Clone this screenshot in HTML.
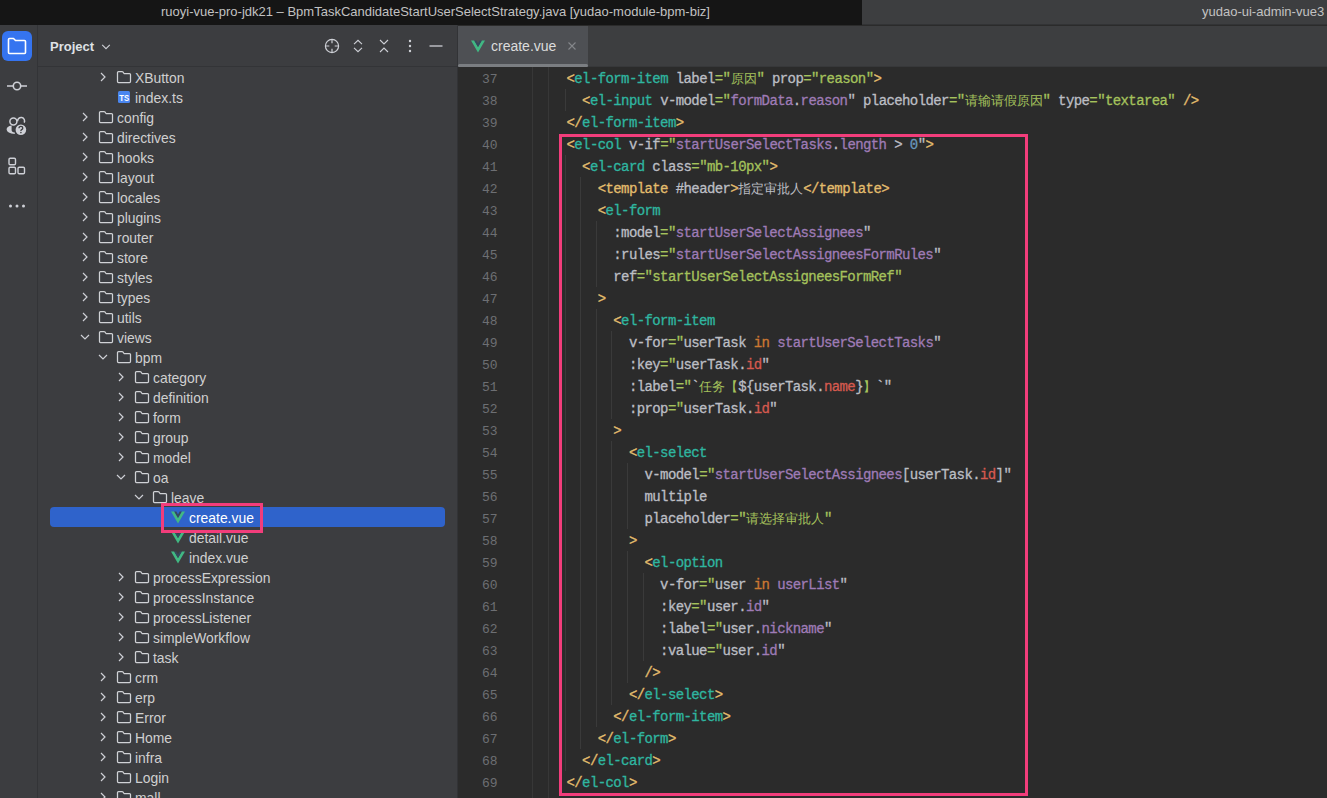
<!DOCTYPE html>
<html><head><meta charset="utf-8"><style>
*{margin:0;padding:0;box-sizing:border-box}
html,body{width:1327px;height:798px;overflow:hidden;background:#2b2b2b;font-family:"Liberation Sans",sans-serif}
.abs{position:absolute}
#title{position:absolute;left:0;top:0;width:862px;height:25px;background:#151515}
#title2{position:absolute;left:862px;top:0;width:465px;height:25px;background:#3d3e40;border-bottom:1px solid #323335}
.ttl{position:absolute;top:-1px;height:25px;line-height:25px;font-size:13px;color:#c2c2c2;white-space:nowrap}
#strip{position:absolute;left:0;top:25px;width:37px;height:773px;background:#3c3d40}
#sb{position:absolute;left:37px;top:25px;width:1px;height:773px;background:#333437}
#panel{position:absolute;left:38px;top:25px;width:419px;height:773px;background:#3c3d40}
#ph{position:absolute;left:38px;top:66px;width:419px;height:1px;background:#333437}
#tabbar{position:absolute;left:457px;top:26px;width:870px;height:41px;background:#3d3e40}
#editor{position:absolute;left:457px;top:67px;width:870px;height:731px;background:#2b2b2b}
.row{position:absolute;left:38px;width:419px;height:20px}
.tt{position:absolute;top:1px;height:20px;line-height:20px;font-size:13.9px;color:#d0d0d0;white-space:nowrap}
.ln{position:absolute;height:22px;line-height:22px;padding-top:1px;font-family:"Liberation Mono",monospace;font-size:14px;letter-spacing:-0.6px;white-space:pre;-webkit-text-stroke:0.3px}
.cj{display:inline-block;width:13.0px;font-style:normal;text-align:center;font-size:13px;-webkit-text-stroke:0}
.num{position:absolute;left:457px;width:40.5px;text-align:right;height:22px;line-height:22px;font-family:"Liberation Mono",monospace;font-size:13px;padding-top:2px;color:#6d6f73}
.guide{position:absolute;width:1px;background:#3a3a3a}
.fi,.ar{display:block}
</style></head><body>
<div id="title"></div><div id="title2"></div>
<div class="ttl" style="left:161px">ruoyi-vue-pro-jdk21 – BpmTaskCandidateStartUserSelectStrategy.java [yudao-module-bpm-biz]</div>
<div class="ttl" style="left:1202px">yudao-ui-admin-vue3</div>
<div id="strip"></div><div id="sb"></div>
<div id="panel"></div><div id="ph"></div>
<div id="tabbar"></div><div class="abs" style="left:457px;top:66px;width:870px;height:1px;background:#37383a"></div>
<div id="editor"></div><div class="abs" style="left:457px;top:25px;width:1px;height:773px;background:#323336"></div>
<!-- strip icons -->
<div class="abs" style="left:2px;top:31px;width:30px;height:30px;border-radius:6px;background:#3574f0"></div>
<svg class="abs" style="left:0;top:25px" width="37" height="200" viewBox="0 0 37 200">
  <path d="M8.5 14.5 Q8.5 13.5 9.5 13.5 H13.5 L15.5 15.5 H24.5 Q25.5 15.5 25.5 16.5 V27.5 Q25.5 28.5 24.5 28.5 H9.5 Q8.5 28.5 8.5 27.5 Z" fill="none" stroke="#fff" stroke-width="1.6" stroke-linejoin="round"/>
  <path d="M7 61 H13.3 M20.7 61 H27" stroke="#ced0d6" stroke-width="1.6"/>
  <circle cx="17" cy="61" r="3.7" fill="none" stroke="#ced0d6" stroke-width="1.6"/>
  <circle cx="13.4" cy="96.4" r="3.5" fill="none" stroke="#ced0d6" stroke-width="1.5"/>
  <path d="M17.6 96.2 A3.5 3.5 0 1 1 24.2 97.6" fill="none" stroke="#ced0d6" stroke-width="1.5"/>
  <path d="M11.6 100.6 Q6.6 101.4 6.6 104.6 Q6.9 108.6 14.8 108.9 L14.8 107.4 Q11.6 107.2 11.6 105 Z" fill="#ced0d6"/>
  <circle cx="20.9" cy="104.8" r="6.3" fill="#3c3d40"/>
  <circle cx="20.9" cy="104.8" r="5.3" fill="#ced0d6"/>
  <path d="M19 103.2 Q19 101.3 20.9 101.3 Q22.8 101.3 22.8 103 Q22.8 104.2 21.6 104.6 Q20.9 104.9 20.9 106" fill="none" stroke="#3c3d40" stroke-width="1.3"/>
  <circle cx="20.9" cy="107.6" r="0.8" fill="#3c3d40"/>
  <rect x="9" y="133.2" width="6.5" height="6.5" rx="1.2" fill="none" stroke="#ced0d6" stroke-width="1.4"/>
  <rect x="9" y="142.2" width="6.5" height="6.5" rx="1.2" fill="none" stroke="#ced0d6" stroke-width="1.4"/>
  <rect x="18" y="142.2" width="6.5" height="6.5" rx="1.2" fill="none" stroke="#ced0d6" stroke-width="1.4"/>
  <circle cx="10.5" cy="181" r="1.5" fill="#ced0d6"/><circle cx="17" cy="181" r="1.5" fill="#ced0d6"/><circle cx="23.5" cy="181" r="1.5" fill="#ced0d6"/>
</svg>
<!-- panel header -->
<svg class="abs" style="left:100px;top:40px" width="12" height="12" viewBox="0 0 12 12"><path d="M2.2 4.8 L6 8.6 L9.8 4.8" fill="none" stroke="#ced0d6" stroke-width="1.1"/></svg>
<div class="abs" style="left:50px;top:26px;height:41px;line-height:41px;font-size:13px;font-weight:bold;color:#dfe1e5">Project</div>
<svg class="abs" style="left:300px;top:25px" width="157" height="41" viewBox="0 0 157 41">
  
  <circle cx="32" cy="21" r="6.6" fill="none" stroke="#ced0d6" stroke-width="1.2"/>
  <path d="M32 14.5 V18.3 M32 23.7 V27.5 M25.5 21 H29.3 M34.7 21 H38.5" stroke="#ced0d6" stroke-width="1.2"/>
  <path d="M54 19.2 L58 15.3 L62 19.2 M54 22.8 L58 26.7 L62 22.8" fill="none" stroke="#ced0d6" stroke-width="1.1"/>
  <path d="M80 15 L84 19 L88 15 M80 27 L84 23 L88 27" fill="none" stroke="#ced0d6" stroke-width="1.1"/>
  <circle cx="110" cy="16" r="1.2" fill="#ced0d6"/><circle cx="110" cy="21" r="1.2" fill="#ced0d6"/><circle cx="110" cy="26" r="1.2" fill="#ced0d6"/>
  <path d="M129.5 21 H142.5" stroke="#ced0d6" stroke-width="1.3"/>
</svg>
<!-- tree -->
<div class="abs" style="left:50px;top:507px;width:395px;height:20px;border-radius:4px;background:#2f63cb"></div>
<div class="row" style="top:67px"><div style="position:absolute;left:57px;top:2px"><svg class="ar" width="16" height="16" viewBox="0 0 16 16"><path d="M6 4 L10 8 L6 12" fill="none" stroke="#ced0d6" stroke-width="1.2"/></svg></div><div style="position:absolute;left:78px;top:2px"><svg class="fi" width="16" height="16" viewBox="0 0 16 16"><path d="M1.5 3.5 Q1.5 2.5 2.5 2.5 H6 Q6.6 2.5 7 3 L8 4.5 H13.5 Q14.5 4.5 14.5 5.5 V12.5 Q14.5 13.5 13.5 13.5 H2.5 Q1.5 13.5 1.5 12.5 Z" fill="#3b3d42" stroke="#d0d2d6" stroke-width="1.25" stroke-linejoin="round"/></svg></div><div class="tt" style="left:97px;">XButton</div></div><div class="row" style="top:87px"><div style="position:absolute;left:78px;top:2px"><svg class="fi" width="16" height="16" viewBox="0 0 16 16"><rect x="2" y="2" width="12" height="12" rx="1.5" fill="#4a86ef"/><text x="8.2" y="12" font-family="Liberation Sans" font-size="8.8" font-weight="bold" fill="#fff" text-anchor="middle" textLength="10" lengthAdjust="spacingAndGlyphs">TS</text></svg></div><div class="tt" style="left:97px;">index.ts</div></div><div class="row" style="top:107px"><div style="position:absolute;left:39px;top:2px"><svg class="ar" width="16" height="16" viewBox="0 0 16 16"><path d="M6 4 L10 8 L6 12" fill="none" stroke="#ced0d6" stroke-width="1.2"/></svg></div><div style="position:absolute;left:60px;top:2px"><svg class="fi" width="16" height="16" viewBox="0 0 16 16"><path d="M1.5 3.5 Q1.5 2.5 2.5 2.5 H6 Q6.6 2.5 7 3 L8 4.5 H13.5 Q14.5 4.5 14.5 5.5 V12.5 Q14.5 13.5 13.5 13.5 H2.5 Q1.5 13.5 1.5 12.5 Z" fill="#3b3d42" stroke="#d0d2d6" stroke-width="1.25" stroke-linejoin="round"/></svg></div><div class="tt" style="left:79px;">config</div></div><div class="row" style="top:127px"><div style="position:absolute;left:39px;top:2px"><svg class="ar" width="16" height="16" viewBox="0 0 16 16"><path d="M6 4 L10 8 L6 12" fill="none" stroke="#ced0d6" stroke-width="1.2"/></svg></div><div style="position:absolute;left:60px;top:2px"><svg class="fi" width="16" height="16" viewBox="0 0 16 16"><path d="M1.5 3.5 Q1.5 2.5 2.5 2.5 H6 Q6.6 2.5 7 3 L8 4.5 H13.5 Q14.5 4.5 14.5 5.5 V12.5 Q14.5 13.5 13.5 13.5 H2.5 Q1.5 13.5 1.5 12.5 Z" fill="#3b3d42" stroke="#d0d2d6" stroke-width="1.25" stroke-linejoin="round"/></svg></div><div class="tt" style="left:79px;">directives</div></div><div class="row" style="top:147px"><div style="position:absolute;left:39px;top:2px"><svg class="ar" width="16" height="16" viewBox="0 0 16 16"><path d="M6 4 L10 8 L6 12" fill="none" stroke="#ced0d6" stroke-width="1.2"/></svg></div><div style="position:absolute;left:60px;top:2px"><svg class="fi" width="16" height="16" viewBox="0 0 16 16"><path d="M1.5 3.5 Q1.5 2.5 2.5 2.5 H6 Q6.6 2.5 7 3 L8 4.5 H13.5 Q14.5 4.5 14.5 5.5 V12.5 Q14.5 13.5 13.5 13.5 H2.5 Q1.5 13.5 1.5 12.5 Z" fill="#3b3d42" stroke="#d0d2d6" stroke-width="1.25" stroke-linejoin="round"/></svg></div><div class="tt" style="left:79px;">hooks</div></div><div class="row" style="top:167px"><div style="position:absolute;left:39px;top:2px"><svg class="ar" width="16" height="16" viewBox="0 0 16 16"><path d="M6 4 L10 8 L6 12" fill="none" stroke="#ced0d6" stroke-width="1.2"/></svg></div><div style="position:absolute;left:60px;top:2px"><svg class="fi" width="16" height="16" viewBox="0 0 16 16"><path d="M1.5 3.5 Q1.5 2.5 2.5 2.5 H6 Q6.6 2.5 7 3 L8 4.5 H13.5 Q14.5 4.5 14.5 5.5 V12.5 Q14.5 13.5 13.5 13.5 H2.5 Q1.5 13.5 1.5 12.5 Z" fill="#3b3d42" stroke="#d0d2d6" stroke-width="1.25" stroke-linejoin="round"/></svg></div><div class="tt" style="left:79px;">layout</div></div><div class="row" style="top:187px"><div style="position:absolute;left:39px;top:2px"><svg class="ar" width="16" height="16" viewBox="0 0 16 16"><path d="M6 4 L10 8 L6 12" fill="none" stroke="#ced0d6" stroke-width="1.2"/></svg></div><div style="position:absolute;left:60px;top:2px"><svg class="fi" width="16" height="16" viewBox="0 0 16 16"><path d="M1.5 3.5 Q1.5 2.5 2.5 2.5 H6 Q6.6 2.5 7 3 L8 4.5 H13.5 Q14.5 4.5 14.5 5.5 V12.5 Q14.5 13.5 13.5 13.5 H2.5 Q1.5 13.5 1.5 12.5 Z" fill="#3b3d42" stroke="#d0d2d6" stroke-width="1.25" stroke-linejoin="round"/></svg></div><div class="tt" style="left:79px;">locales</div></div><div class="row" style="top:207px"><div style="position:absolute;left:39px;top:2px"><svg class="ar" width="16" height="16" viewBox="0 0 16 16"><path d="M6 4 L10 8 L6 12" fill="none" stroke="#ced0d6" stroke-width="1.2"/></svg></div><div style="position:absolute;left:60px;top:2px"><svg class="fi" width="16" height="16" viewBox="0 0 16 16"><path d="M1.5 3.5 Q1.5 2.5 2.5 2.5 H6 Q6.6 2.5 7 3 L8 4.5 H13.5 Q14.5 4.5 14.5 5.5 V12.5 Q14.5 13.5 13.5 13.5 H2.5 Q1.5 13.5 1.5 12.5 Z" fill="#3b3d42" stroke="#d0d2d6" stroke-width="1.25" stroke-linejoin="round"/></svg></div><div class="tt" style="left:79px;">plugins</div></div><div class="row" style="top:227px"><div style="position:absolute;left:39px;top:2px"><svg class="ar" width="16" height="16" viewBox="0 0 16 16"><path d="M6 4 L10 8 L6 12" fill="none" stroke="#ced0d6" stroke-width="1.2"/></svg></div><div style="position:absolute;left:60px;top:2px"><svg class="fi" width="16" height="16" viewBox="0 0 16 16"><path d="M1.5 3.5 Q1.5 2.5 2.5 2.5 H6 Q6.6 2.5 7 3 L8 4.5 H13.5 Q14.5 4.5 14.5 5.5 V12.5 Q14.5 13.5 13.5 13.5 H2.5 Q1.5 13.5 1.5 12.5 Z" fill="#3b3d42" stroke="#d0d2d6" stroke-width="1.25" stroke-linejoin="round"/></svg></div><div class="tt" style="left:79px;">router</div></div><div class="row" style="top:247px"><div style="position:absolute;left:39px;top:2px"><svg class="ar" width="16" height="16" viewBox="0 0 16 16"><path d="M6 4 L10 8 L6 12" fill="none" stroke="#ced0d6" stroke-width="1.2"/></svg></div><div style="position:absolute;left:60px;top:2px"><svg class="fi" width="16" height="16" viewBox="0 0 16 16"><path d="M1.5 3.5 Q1.5 2.5 2.5 2.5 H6 Q6.6 2.5 7 3 L8 4.5 H13.5 Q14.5 4.5 14.5 5.5 V12.5 Q14.5 13.5 13.5 13.5 H2.5 Q1.5 13.5 1.5 12.5 Z" fill="#3b3d42" stroke="#d0d2d6" stroke-width="1.25" stroke-linejoin="round"/></svg></div><div class="tt" style="left:79px;">store</div></div><div class="row" style="top:267px"><div style="position:absolute;left:39px;top:2px"><svg class="ar" width="16" height="16" viewBox="0 0 16 16"><path d="M6 4 L10 8 L6 12" fill="none" stroke="#ced0d6" stroke-width="1.2"/></svg></div><div style="position:absolute;left:60px;top:2px"><svg class="fi" width="16" height="16" viewBox="0 0 16 16"><path d="M1.5 3.5 Q1.5 2.5 2.5 2.5 H6 Q6.6 2.5 7 3 L8 4.5 H13.5 Q14.5 4.5 14.5 5.5 V12.5 Q14.5 13.5 13.5 13.5 H2.5 Q1.5 13.5 1.5 12.5 Z" fill="#3b3d42" stroke="#d0d2d6" stroke-width="1.25" stroke-linejoin="round"/></svg></div><div class="tt" style="left:79px;">styles</div></div><div class="row" style="top:287px"><div style="position:absolute;left:39px;top:2px"><svg class="ar" width="16" height="16" viewBox="0 0 16 16"><path d="M6 4 L10 8 L6 12" fill="none" stroke="#ced0d6" stroke-width="1.2"/></svg></div><div style="position:absolute;left:60px;top:2px"><svg class="fi" width="16" height="16" viewBox="0 0 16 16"><path d="M1.5 3.5 Q1.5 2.5 2.5 2.5 H6 Q6.6 2.5 7 3 L8 4.5 H13.5 Q14.5 4.5 14.5 5.5 V12.5 Q14.5 13.5 13.5 13.5 H2.5 Q1.5 13.5 1.5 12.5 Z" fill="#3b3d42" stroke="#d0d2d6" stroke-width="1.25" stroke-linejoin="round"/></svg></div><div class="tt" style="left:79px;">types</div></div><div class="row" style="top:307px"><div style="position:absolute;left:39px;top:2px"><svg class="ar" width="16" height="16" viewBox="0 0 16 16"><path d="M6 4 L10 8 L6 12" fill="none" stroke="#ced0d6" stroke-width="1.2"/></svg></div><div style="position:absolute;left:60px;top:2px"><svg class="fi" width="16" height="16" viewBox="0 0 16 16"><path d="M1.5 3.5 Q1.5 2.5 2.5 2.5 H6 Q6.6 2.5 7 3 L8 4.5 H13.5 Q14.5 4.5 14.5 5.5 V12.5 Q14.5 13.5 13.5 13.5 H2.5 Q1.5 13.5 1.5 12.5 Z" fill="#3b3d42" stroke="#d0d2d6" stroke-width="1.25" stroke-linejoin="round"/></svg></div><div class="tt" style="left:79px;">utils</div></div><div class="row" style="top:327px"><div style="position:absolute;left:39px;top:2px"><svg class="ar" width="16" height="16" viewBox="0 0 16 16"><path d="M4 6 L8 10 L12 6" fill="none" stroke="#ced0d6" stroke-width="1.2"/></svg></div><div style="position:absolute;left:60px;top:2px"><svg class="fi" width="16" height="16" viewBox="0 0 16 16"><path d="M1.5 3.5 Q1.5 2.5 2.5 2.5 H6 Q6.6 2.5 7 3 L8 4.5 H13.5 Q14.5 4.5 14.5 5.5 V12.5 Q14.5 13.5 13.5 13.5 H2.5 Q1.5 13.5 1.5 12.5 Z" fill="#3b3d42" stroke="#d0d2d6" stroke-width="1.25" stroke-linejoin="round"/></svg></div><div class="tt" style="left:79px;">views</div></div><div class="row" style="top:347px"><div style="position:absolute;left:57px;top:2px"><svg class="ar" width="16" height="16" viewBox="0 0 16 16"><path d="M4 6 L8 10 L12 6" fill="none" stroke="#ced0d6" stroke-width="1.2"/></svg></div><div style="position:absolute;left:78px;top:2px"><svg class="fi" width="16" height="16" viewBox="0 0 16 16"><path d="M1.5 3.5 Q1.5 2.5 2.5 2.5 H6 Q6.6 2.5 7 3 L8 4.5 H13.5 Q14.5 4.5 14.5 5.5 V12.5 Q14.5 13.5 13.5 13.5 H2.5 Q1.5 13.5 1.5 12.5 Z" fill="#3b3d42" stroke="#d0d2d6" stroke-width="1.25" stroke-linejoin="round"/></svg></div><div class="tt" style="left:97px;">bpm</div></div><div class="row" style="top:367px"><div style="position:absolute;left:75px;top:2px"><svg class="ar" width="16" height="16" viewBox="0 0 16 16"><path d="M6 4 L10 8 L6 12" fill="none" stroke="#ced0d6" stroke-width="1.2"/></svg></div><div style="position:absolute;left:96px;top:2px"><svg class="fi" width="16" height="16" viewBox="0 0 16 16"><path d="M1.5 3.5 Q1.5 2.5 2.5 2.5 H6 Q6.6 2.5 7 3 L8 4.5 H13.5 Q14.5 4.5 14.5 5.5 V12.5 Q14.5 13.5 13.5 13.5 H2.5 Q1.5 13.5 1.5 12.5 Z" fill="#3b3d42" stroke="#d0d2d6" stroke-width="1.25" stroke-linejoin="round"/></svg></div><div class="tt" style="left:115px;">category</div></div><div class="row" style="top:387px"><div style="position:absolute;left:75px;top:2px"><svg class="ar" width="16" height="16" viewBox="0 0 16 16"><path d="M6 4 L10 8 L6 12" fill="none" stroke="#ced0d6" stroke-width="1.2"/></svg></div><div style="position:absolute;left:96px;top:2px"><svg class="fi" width="16" height="16" viewBox="0 0 16 16"><path d="M1.5 3.5 Q1.5 2.5 2.5 2.5 H6 Q6.6 2.5 7 3 L8 4.5 H13.5 Q14.5 4.5 14.5 5.5 V12.5 Q14.5 13.5 13.5 13.5 H2.5 Q1.5 13.5 1.5 12.5 Z" fill="#3b3d42" stroke="#d0d2d6" stroke-width="1.25" stroke-linejoin="round"/></svg></div><div class="tt" style="left:115px;">definition</div></div><div class="row" style="top:407px"><div style="position:absolute;left:75px;top:2px"><svg class="ar" width="16" height="16" viewBox="0 0 16 16"><path d="M6 4 L10 8 L6 12" fill="none" stroke="#ced0d6" stroke-width="1.2"/></svg></div><div style="position:absolute;left:96px;top:2px"><svg class="fi" width="16" height="16" viewBox="0 0 16 16"><path d="M1.5 3.5 Q1.5 2.5 2.5 2.5 H6 Q6.6 2.5 7 3 L8 4.5 H13.5 Q14.5 4.5 14.5 5.5 V12.5 Q14.5 13.5 13.5 13.5 H2.5 Q1.5 13.5 1.5 12.5 Z" fill="#3b3d42" stroke="#d0d2d6" stroke-width="1.25" stroke-linejoin="round"/></svg></div><div class="tt" style="left:115px;">form</div></div><div class="row" style="top:427px"><div style="position:absolute;left:75px;top:2px"><svg class="ar" width="16" height="16" viewBox="0 0 16 16"><path d="M6 4 L10 8 L6 12" fill="none" stroke="#ced0d6" stroke-width="1.2"/></svg></div><div style="position:absolute;left:96px;top:2px"><svg class="fi" width="16" height="16" viewBox="0 0 16 16"><path d="M1.5 3.5 Q1.5 2.5 2.5 2.5 H6 Q6.6 2.5 7 3 L8 4.5 H13.5 Q14.5 4.5 14.5 5.5 V12.5 Q14.5 13.5 13.5 13.5 H2.5 Q1.5 13.5 1.5 12.5 Z" fill="#3b3d42" stroke="#d0d2d6" stroke-width="1.25" stroke-linejoin="round"/></svg></div><div class="tt" style="left:115px;">group</div></div><div class="row" style="top:447px"><div style="position:absolute;left:75px;top:2px"><svg class="ar" width="16" height="16" viewBox="0 0 16 16"><path d="M6 4 L10 8 L6 12" fill="none" stroke="#ced0d6" stroke-width="1.2"/></svg></div><div style="position:absolute;left:96px;top:2px"><svg class="fi" width="16" height="16" viewBox="0 0 16 16"><path d="M1.5 3.5 Q1.5 2.5 2.5 2.5 H6 Q6.6 2.5 7 3 L8 4.5 H13.5 Q14.5 4.5 14.5 5.5 V12.5 Q14.5 13.5 13.5 13.5 H2.5 Q1.5 13.5 1.5 12.5 Z" fill="#3b3d42" stroke="#d0d2d6" stroke-width="1.25" stroke-linejoin="round"/></svg></div><div class="tt" style="left:115px;">model</div></div><div class="row" style="top:467px"><div style="position:absolute;left:75px;top:2px"><svg class="ar" width="16" height="16" viewBox="0 0 16 16"><path d="M4 6 L8 10 L12 6" fill="none" stroke="#ced0d6" stroke-width="1.2"/></svg></div><div style="position:absolute;left:96px;top:2px"><svg class="fi" width="16" height="16" viewBox="0 0 16 16"><path d="M1.5 3.5 Q1.5 2.5 2.5 2.5 H6 Q6.6 2.5 7 3 L8 4.5 H13.5 Q14.5 4.5 14.5 5.5 V12.5 Q14.5 13.5 13.5 13.5 H2.5 Q1.5 13.5 1.5 12.5 Z" fill="#3b3d42" stroke="#d0d2d6" stroke-width="1.25" stroke-linejoin="round"/></svg></div><div class="tt" style="left:115px;">oa</div></div><div class="row" style="top:487px"><div style="position:absolute;left:93px;top:2px"><svg class="ar" width="16" height="16" viewBox="0 0 16 16"><path d="M4 6 L8 10 L12 6" fill="none" stroke="#ced0d6" stroke-width="1.2"/></svg></div><div style="position:absolute;left:114px;top:2px"><svg class="fi" width="16" height="16" viewBox="0 0 16 16"><path d="M1.5 3.5 Q1.5 2.5 2.5 2.5 H6 Q6.6 2.5 7 3 L8 4.5 H13.5 Q14.5 4.5 14.5 5.5 V12.5 Q14.5 13.5 13.5 13.5 H2.5 Q1.5 13.5 1.5 12.5 Z" fill="#3b3d42" stroke="#d0d2d6" stroke-width="1.25" stroke-linejoin="round"/></svg></div><div class="tt" style="left:133px;">leave</div></div><div class="row" style="top:507px"><div style="position:absolute;left:132px;top:2px"><svg class="fi" width="16" height="16" viewBox="0 0 16 16"><path d="M1 2.5 H4.2 L8 9 L11.8 2.5 H15 L8 14.5 Z" fill="#41b883"/><path d="M4.2 2.5 H6.3 L8 5.5 L9.7 2.5 H11.8 L8 9 Z" fill="#35495e"/></svg></div><div class="tt" style="left:151px;color:#fff">create.vue</div></div><div class="row" style="top:527px"><div style="position:absolute;left:132px;top:2px"><svg class="fi" width="16" height="16" viewBox="0 0 16 16"><path d="M1 2.5 H4.2 L8 9 L11.8 2.5 H15 L8 14.5 Z" fill="#41b883"/><path d="M4.2 2.5 H6.3 L8 5.5 L9.7 2.5 H11.8 L8 9 Z" fill="#35495e"/></svg></div><div class="tt" style="left:151px;">detail.vue</div></div><div class="row" style="top:547px"><div style="position:absolute;left:132px;top:2px"><svg class="fi" width="16" height="16" viewBox="0 0 16 16"><path d="M1 2.5 H4.2 L8 9 L11.8 2.5 H15 L8 14.5 Z" fill="#41b883"/><path d="M4.2 2.5 H6.3 L8 5.5 L9.7 2.5 H11.8 L8 9 Z" fill="#35495e"/></svg></div><div class="tt" style="left:151px;">index.vue</div></div><div class="row" style="top:567px"><div style="position:absolute;left:75px;top:2px"><svg class="ar" width="16" height="16" viewBox="0 0 16 16"><path d="M6 4 L10 8 L6 12" fill="none" stroke="#ced0d6" stroke-width="1.2"/></svg></div><div style="position:absolute;left:96px;top:2px"><svg class="fi" width="16" height="16" viewBox="0 0 16 16"><path d="M1.5 3.5 Q1.5 2.5 2.5 2.5 H6 Q6.6 2.5 7 3 L8 4.5 H13.5 Q14.5 4.5 14.5 5.5 V12.5 Q14.5 13.5 13.5 13.5 H2.5 Q1.5 13.5 1.5 12.5 Z" fill="#3b3d42" stroke="#d0d2d6" stroke-width="1.25" stroke-linejoin="round"/></svg></div><div class="tt" style="left:115px;">processExpression</div></div><div class="row" style="top:587px"><div style="position:absolute;left:75px;top:2px"><svg class="ar" width="16" height="16" viewBox="0 0 16 16"><path d="M6 4 L10 8 L6 12" fill="none" stroke="#ced0d6" stroke-width="1.2"/></svg></div><div style="position:absolute;left:96px;top:2px"><svg class="fi" width="16" height="16" viewBox="0 0 16 16"><path d="M1.5 3.5 Q1.5 2.5 2.5 2.5 H6 Q6.6 2.5 7 3 L8 4.5 H13.5 Q14.5 4.5 14.5 5.5 V12.5 Q14.5 13.5 13.5 13.5 H2.5 Q1.5 13.5 1.5 12.5 Z" fill="#3b3d42" stroke="#d0d2d6" stroke-width="1.25" stroke-linejoin="round"/></svg></div><div class="tt" style="left:115px;">processInstance</div></div><div class="row" style="top:607px"><div style="position:absolute;left:75px;top:2px"><svg class="ar" width="16" height="16" viewBox="0 0 16 16"><path d="M6 4 L10 8 L6 12" fill="none" stroke="#ced0d6" stroke-width="1.2"/></svg></div><div style="position:absolute;left:96px;top:2px"><svg class="fi" width="16" height="16" viewBox="0 0 16 16"><path d="M1.5 3.5 Q1.5 2.5 2.5 2.5 H6 Q6.6 2.5 7 3 L8 4.5 H13.5 Q14.5 4.5 14.5 5.5 V12.5 Q14.5 13.5 13.5 13.5 H2.5 Q1.5 13.5 1.5 12.5 Z" fill="#3b3d42" stroke="#d0d2d6" stroke-width="1.25" stroke-linejoin="round"/></svg></div><div class="tt" style="left:115px;">processListener</div></div><div class="row" style="top:627px"><div style="position:absolute;left:75px;top:2px"><svg class="ar" width="16" height="16" viewBox="0 0 16 16"><path d="M6 4 L10 8 L6 12" fill="none" stroke="#ced0d6" stroke-width="1.2"/></svg></div><div style="position:absolute;left:96px;top:2px"><svg class="fi" width="16" height="16" viewBox="0 0 16 16"><path d="M1.5 3.5 Q1.5 2.5 2.5 2.5 H6 Q6.6 2.5 7 3 L8 4.5 H13.5 Q14.5 4.5 14.5 5.5 V12.5 Q14.5 13.5 13.5 13.5 H2.5 Q1.5 13.5 1.5 12.5 Z" fill="#3b3d42" stroke="#d0d2d6" stroke-width="1.25" stroke-linejoin="round"/></svg></div><div class="tt" style="left:115px;">simpleWorkflow</div></div><div class="row" style="top:647px"><div style="position:absolute;left:75px;top:2px"><svg class="ar" width="16" height="16" viewBox="0 0 16 16"><path d="M6 4 L10 8 L6 12" fill="none" stroke="#ced0d6" stroke-width="1.2"/></svg></div><div style="position:absolute;left:96px;top:2px"><svg class="fi" width="16" height="16" viewBox="0 0 16 16"><path d="M1.5 3.5 Q1.5 2.5 2.5 2.5 H6 Q6.6 2.5 7 3 L8 4.5 H13.5 Q14.5 4.5 14.5 5.5 V12.5 Q14.5 13.5 13.5 13.5 H2.5 Q1.5 13.5 1.5 12.5 Z" fill="#3b3d42" stroke="#d0d2d6" stroke-width="1.25" stroke-linejoin="round"/></svg></div><div class="tt" style="left:115px;">task</div></div><div class="row" style="top:667px"><div style="position:absolute;left:57px;top:2px"><svg class="ar" width="16" height="16" viewBox="0 0 16 16"><path d="M6 4 L10 8 L6 12" fill="none" stroke="#ced0d6" stroke-width="1.2"/></svg></div><div style="position:absolute;left:78px;top:2px"><svg class="fi" width="16" height="16" viewBox="0 0 16 16"><path d="M1.5 3.5 Q1.5 2.5 2.5 2.5 H6 Q6.6 2.5 7 3 L8 4.5 H13.5 Q14.5 4.5 14.5 5.5 V12.5 Q14.5 13.5 13.5 13.5 H2.5 Q1.5 13.5 1.5 12.5 Z" fill="#3b3d42" stroke="#d0d2d6" stroke-width="1.25" stroke-linejoin="round"/></svg></div><div class="tt" style="left:97px;">crm</div></div><div class="row" style="top:687px"><div style="position:absolute;left:57px;top:2px"><svg class="ar" width="16" height="16" viewBox="0 0 16 16"><path d="M6 4 L10 8 L6 12" fill="none" stroke="#ced0d6" stroke-width="1.2"/></svg></div><div style="position:absolute;left:78px;top:2px"><svg class="fi" width="16" height="16" viewBox="0 0 16 16"><path d="M1.5 3.5 Q1.5 2.5 2.5 2.5 H6 Q6.6 2.5 7 3 L8 4.5 H13.5 Q14.5 4.5 14.5 5.5 V12.5 Q14.5 13.5 13.5 13.5 H2.5 Q1.5 13.5 1.5 12.5 Z" fill="#3b3d42" stroke="#d0d2d6" stroke-width="1.25" stroke-linejoin="round"/></svg></div><div class="tt" style="left:97px;">erp</div></div><div class="row" style="top:707px"><div style="position:absolute;left:57px;top:2px"><svg class="ar" width="16" height="16" viewBox="0 0 16 16"><path d="M6 4 L10 8 L6 12" fill="none" stroke="#ced0d6" stroke-width="1.2"/></svg></div><div style="position:absolute;left:78px;top:2px"><svg class="fi" width="16" height="16" viewBox="0 0 16 16"><path d="M1.5 3.5 Q1.5 2.5 2.5 2.5 H6 Q6.6 2.5 7 3 L8 4.5 H13.5 Q14.5 4.5 14.5 5.5 V12.5 Q14.5 13.5 13.5 13.5 H2.5 Q1.5 13.5 1.5 12.5 Z" fill="#3b3d42" stroke="#d0d2d6" stroke-width="1.25" stroke-linejoin="round"/></svg></div><div class="tt" style="left:97px;">Error</div></div><div class="row" style="top:727px"><div style="position:absolute;left:57px;top:2px"><svg class="ar" width="16" height="16" viewBox="0 0 16 16"><path d="M6 4 L10 8 L6 12" fill="none" stroke="#ced0d6" stroke-width="1.2"/></svg></div><div style="position:absolute;left:78px;top:2px"><svg class="fi" width="16" height="16" viewBox="0 0 16 16"><path d="M1.5 3.5 Q1.5 2.5 2.5 2.5 H6 Q6.6 2.5 7 3 L8 4.5 H13.5 Q14.5 4.5 14.5 5.5 V12.5 Q14.5 13.5 13.5 13.5 H2.5 Q1.5 13.5 1.5 12.5 Z" fill="#3b3d42" stroke="#d0d2d6" stroke-width="1.25" stroke-linejoin="round"/></svg></div><div class="tt" style="left:97px;">Home</div></div><div class="row" style="top:747px"><div style="position:absolute;left:57px;top:2px"><svg class="ar" width="16" height="16" viewBox="0 0 16 16"><path d="M6 4 L10 8 L6 12" fill="none" stroke="#ced0d6" stroke-width="1.2"/></svg></div><div style="position:absolute;left:78px;top:2px"><svg class="fi" width="16" height="16" viewBox="0 0 16 16"><path d="M1.5 3.5 Q1.5 2.5 2.5 2.5 H6 Q6.6 2.5 7 3 L8 4.5 H13.5 Q14.5 4.5 14.5 5.5 V12.5 Q14.5 13.5 13.5 13.5 H2.5 Q1.5 13.5 1.5 12.5 Z" fill="#3b3d42" stroke="#d0d2d6" stroke-width="1.25" stroke-linejoin="round"/></svg></div><div class="tt" style="left:97px;">infra</div></div><div class="row" style="top:767px"><div style="position:absolute;left:57px;top:2px"><svg class="ar" width="16" height="16" viewBox="0 0 16 16"><path d="M6 4 L10 8 L6 12" fill="none" stroke="#ced0d6" stroke-width="1.2"/></svg></div><div style="position:absolute;left:78px;top:2px"><svg class="fi" width="16" height="16" viewBox="0 0 16 16"><path d="M1.5 3.5 Q1.5 2.5 2.5 2.5 H6 Q6.6 2.5 7 3 L8 4.5 H13.5 Q14.5 4.5 14.5 5.5 V12.5 Q14.5 13.5 13.5 13.5 H2.5 Q1.5 13.5 1.5 12.5 Z" fill="#3b3d42" stroke="#d0d2d6" stroke-width="1.25" stroke-linejoin="round"/></svg></div><div class="tt" style="left:97px;">Login</div></div><div class="row" style="top:787px"><div style="position:absolute;left:57px;top:2px"><svg class="ar" width="16" height="16" viewBox="0 0 16 16"><path d="M6 4 L10 8 L6 12" fill="none" stroke="#ced0d6" stroke-width="1.2"/></svg></div><div style="position:absolute;left:78px;top:2px"><svg class="fi" width="16" height="16" viewBox="0 0 16 16"><path d="M1.5 3.5 Q1.5 2.5 2.5 2.5 H6 Q6.6 2.5 7 3 L8 4.5 H13.5 Q14.5 4.5 14.5 5.5 V12.5 Q14.5 13.5 13.5 13.5 H2.5 Q1.5 13.5 1.5 12.5 Z" fill="#3b3d42" stroke="#d0d2d6" stroke-width="1.25" stroke-linejoin="round"/></svg></div><div class="tt" style="left:97px;">mall</div></div>
<div class="abs" style="left:161px;top:503px;width:102px;height:30px;border:3px solid #f23d7b"></div>
<!-- tab -->
<div class="abs" style="left:458px;top:26px;width:130px;height:41px;background:#4e5054"></div>
<div class="abs" style="left:458px;top:64px;width:130px;height:3px;border-radius:2px;background:#7b7e82"></div>
<div class="abs" style="left:470px;top:38px"><svg class="fi" width="16" height="16" viewBox="0 0 16 16"><path d="M1 2.5 H4.2 L8 9 L11.8 2.5 H15 L8 14.5 Z" fill="#41b883"/><path d="M4.2 2.5 H6.3 L8 5.5 L9.7 2.5 H11.8 L8 9 Z" fill="#35495e"/></svg></div>
<div class="abs" style="left:491px;top:26px;height:40px;line-height:40px;font-size:14px;color:#dcdcdc">create.vue</div>
<svg class="abs" style="left:566px;top:40px" width="12" height="12" viewBox="0 0 12 12"><path d="M2.5 2.5 L9.5 9.5 M9.5 2.5 L2.5 9.5" stroke="#85878b" stroke-width="1.1"/></svg>
<!-- gutter -->
<div class="abs" style="left:532px;top:67px;width:1px;height:731px;background:#373737"></div>
<div class="abs" style="left:548px;top:67px;width:1px;height:731px;background:#373737"></div>
<div class="num" style="top:67px">37</div><div class="num" style="top:89px">38</div><div class="num" style="top:111px">39</div><div class="num" style="top:133px">40</div><div class="num" style="top:155px">41</div><div class="num" style="top:177px">42</div><div class="num" style="top:199px">43</div><div class="num" style="top:221px">44</div><div class="num" style="top:243px">45</div><div class="num" style="top:265px">46</div><div class="num" style="top:287px">47</div><div class="num" style="top:309px">48</div><div class="num" style="top:331px">49</div><div class="num" style="top:353px">50</div><div class="num" style="top:375px">51</div><div class="num" style="top:397px">52</div><div class="num" style="top:419px">53</div><div class="num" style="top:441px">54</div><div class="num" style="top:463px">55</div><div class="num" style="top:485px">56</div><div class="num" style="top:507px">57</div><div class="num" style="top:529px">58</div><div class="num" style="top:551px">59</div><div class="num" style="top:573px">60</div><div class="num" style="top:595px">61</div><div class="num" style="top:617px">62</div><div class="num" style="top:639px">63</div><div class="num" style="top:661px">64</div><div class="num" style="top:683px">65</div><div class="num" style="top:705px">66</div><div class="num" style="top:727px">67</div><div class="num" style="top:749px">68</div><div class="num" style="top:771px">69</div>
<div class="guide" style="left:564.5px;top:89px;height:22px"></div><div class="guide" style="left:564.5px;top:155px;height:616px"></div><div class="guide" style="left:580.1px;top:177px;height:572px"></div><div class="guide" style="left:595.7px;top:221px;height:66px"></div><div class="guide" style="left:595.7px;top:309px;height:418px"></div><div class="guide" style="left:611.3px;top:331px;height:88px"></div><div class="guide" style="left:611.3px;top:441px;height:264px"></div><div class="guide" style="left:626.9px;top:463px;height:66px"></div><div class="guide" style="left:626.9px;top:551px;height:132px"></div><div class="guide" style="left:642.5px;top:573px;height:88px"></div>
<div class="ln" style="top:67px;left:566.5px"><span style="color:#e3bd6d">&lt;</span><span style="color:#2fb6a0">el-form-item</span><span style="color:#bcbec4"> </span><span style="color:#bcbec4">label</span><span style="color:#a5c25c">=&quot;</span><i class="cj" style="color:#a5c25c">原</i><i class="cj" style="color:#a5c25c">因</i><span style="color:#a5c25c">&quot;</span><span style="color:#bcbec4"> </span><span style="color:#bcbec4">prop</span><span style="color:#a5c25c">=&quot;reason&quot;</span><span style="color:#e3bd6d">&gt;</span></div><div class="ln" style="top:89px;left:582.1px"><span style="color:#e3bd6d">&lt;</span><span style="color:#2fb6a0">el-input</span><span style="color:#bcbec4"> </span><span style="color:#bcbec4">v-model</span><span style="color:#a5c25c">=&quot;</span><span style="color:#9f7bb6">formData</span><span style="color:#bcbec4">.</span><span style="color:#9f7bb6">reason</span><span style="color:#bcbec4">&quot;</span><span style="color:#bcbec4"> </span><span style="color:#bcbec4">placeholder</span><span style="color:#a5c25c">=&quot;</span><i class="cj" style="color:#a5c25c">请</i><i class="cj" style="color:#a5c25c">输</i><i class="cj" style="color:#a5c25c">请</i><i class="cj" style="color:#a5c25c">假</i><i class="cj" style="color:#a5c25c">原</i><i class="cj" style="color:#a5c25c">因</i><span style="color:#a5c25c">&quot;</span><span style="color:#bcbec4"> </span><span style="color:#bcbec4">type</span><span style="color:#a5c25c">=&quot;textarea&quot;</span><span style="color:#bcbec4"> </span><span style="color:#e3bd6d">/&gt;</span></div><div class="ln" style="top:111px;left:566.5px"><span style="color:#e3bd6d">&lt;/</span><span style="color:#2fb6a0">el-form-item</span><span style="color:#e3bd6d">&gt;</span></div><div class="ln" style="top:133px;left:566.5px"><span style="color:#e3bd6d">&lt;</span><span style="color:#2fb6a0">el-col</span><span style="color:#bcbec4"> </span><span style="color:#bcbec4">v-if</span><span style="color:#a5c25c">=&quot;</span><span style="color:#9f7bb6">startUserSelectTasks</span><span style="color:#bcbec4">.</span><span style="color:#9f7bb6">length</span><span style="color:#bcbec4"> &gt; </span><span style="color:#6897bb">0</span><span style="color:#bcbec4">&quot;</span><span style="color:#e3bd6d">&gt;</span></div><div class="ln" style="top:155px;left:582.1px"><span style="color:#e3bd6d">&lt;</span><span style="color:#2fb6a0">el-card</span><span style="color:#bcbec4"> </span><span style="color:#bcbec4">class</span><span style="color:#a5c25c">=&quot;mb-10px&quot;</span><span style="color:#e3bd6d">&gt;</span></div><div class="ln" style="top:177px;left:597.7px"><span style="color:#e3bd6d">&lt;</span><span style="color:#e3bd6d">template</span><span style="color:#bcbec4"> #header</span><span style="color:#e3bd6d">&gt;</span><i class="cj" style="color:#bcbec4">指</i><i class="cj" style="color:#bcbec4">定</i><i class="cj" style="color:#bcbec4">审</i><i class="cj" style="color:#bcbec4">批</i><i class="cj" style="color:#bcbec4">人</i><span style="color:#e3bd6d">&lt;/</span><span style="color:#e3bd6d">template</span><span style="color:#e3bd6d">&gt;</span></div><div class="ln" style="top:199px;left:597.7px"><span style="color:#e3bd6d">&lt;</span><span style="color:#2fb6a0">el-form</span></div><div class="ln" style="top:221px;left:613.3px"><span style="color:#bcbec4">:model</span><span style="color:#a5c25c">=&quot;</span><span style="color:#9f7bb6">startUserSelectAssignees</span><span style="color:#bcbec4">&quot;</span></div><div class="ln" style="top:243px;left:613.3px"><span style="color:#bcbec4">:rules</span><span style="color:#a5c25c">=&quot;</span><span style="color:#9f7bb6">startUserSelectAssigneesFormRules</span><span style="color:#bcbec4">&quot;</span></div><div class="ln" style="top:265px;left:613.3px"><span style="color:#bcbec4">ref</span><span style="color:#a5c25c">=&quot;startUserSelectAssigneesFormRef&quot;</span></div><div class="ln" style="top:287px;left:597.7px"><span style="color:#e3bd6d">&gt;</span></div><div class="ln" style="top:309px;left:613.3px"><span style="color:#e3bd6d">&lt;</span><span style="color:#2fb6a0">el-form-item</span></div><div class="ln" style="top:331px;left:628.9px"><span style="color:#bcbec4">v-for</span><span style="color:#a5c25c">=&quot;</span><span style="color:#bcbec4">userTask </span><span style="color:#cc7832">in</span><span style="color:#bcbec4"> </span><span style="color:#9f7bb6">startUserSelectTasks</span><span style="color:#bcbec4">&quot;</span></div><div class="ln" style="top:353px;left:628.9px"><span style="color:#bcbec4">:key</span><span style="color:#a5c25c">=&quot;</span><span style="color:#bcbec4">userTask.</span><span style="color:#d65a4f">id</span><span style="color:#bcbec4">&quot;</span></div><div class="ln" style="top:375px;left:628.9px"><span style="color:#bcbec4">:label</span><span style="color:#a5c25c">=&quot;</span><span style="color:#bcbec4">`</span><i class="cj" style="color:#a5c25c">任</i><i class="cj" style="color:#a5c25c">务</i><i class="cj" style="color:#a5c25c">【</i><span style="color:#bcbec4">${userTask.</span><span style="color:#d65a4f">name</span><span style="color:#bcbec4">}</span><i class="cj" style="color:#a5c25c">】</i><span style="color:#bcbec4">`&quot;</span></div><div class="ln" style="top:397px;left:628.9px"><span style="color:#bcbec4">:prop</span><span style="color:#a5c25c">=&quot;</span><span style="color:#bcbec4">userTask.</span><span style="color:#d65a4f">id</span><span style="color:#bcbec4">&quot;</span></div><div class="ln" style="top:419px;left:613.3px"><span style="color:#e3bd6d">&gt;</span></div><div class="ln" style="top:441px;left:628.9px"><span style="color:#e3bd6d">&lt;</span><span style="color:#2fb6a0">el-select</span></div><div class="ln" style="top:463px;left:644.5px"><span style="color:#bcbec4">v-model</span><span style="color:#a5c25c">=&quot;</span><span style="color:#9f7bb6">startUserSelectAssignees</span><span style="color:#bcbec4">[userTask.</span><span style="color:#d65a4f">id</span><span style="color:#bcbec4">]&quot;</span></div><div class="ln" style="top:485px;left:644.5px"><span style="color:#bcbec4">multiple</span></div><div class="ln" style="top:507px;left:644.5px"><span style="color:#bcbec4">placeholder</span><span style="color:#a5c25c">=&quot;</span><i class="cj" style="color:#a5c25c">请</i><i class="cj" style="color:#a5c25c">选</i><i class="cj" style="color:#a5c25c">择</i><i class="cj" style="color:#a5c25c">审</i><i class="cj" style="color:#a5c25c">批</i><i class="cj" style="color:#a5c25c">人</i><span style="color:#a5c25c">&quot;</span></div><div class="ln" style="top:529px;left:628.9px"><span style="color:#e3bd6d">&gt;</span></div><div class="ln" style="top:551px;left:644.5px"><span style="color:#e3bd6d">&lt;</span><span style="color:#2fb6a0">el-option</span></div><div class="ln" style="top:573px;left:660.1px"><span style="color:#bcbec4">v-for</span><span style="color:#a5c25c">=&quot;</span><span style="color:#bcbec4">user </span><span style="color:#cc7832">in</span><span style="color:#bcbec4"> </span><span style="color:#9f7bb6">userList</span><span style="color:#bcbec4">&quot;</span></div><div class="ln" style="top:595px;left:660.1px"><span style="color:#bcbec4">:key</span><span style="color:#a5c25c">=&quot;</span><span style="color:#bcbec4">user.</span><span style="color:#9f7bb6">id</span><span style="color:#bcbec4">&quot;</span></div><div class="ln" style="top:617px;left:660.1px"><span style="color:#bcbec4">:label</span><span style="color:#a5c25c">=&quot;</span><span style="color:#bcbec4">user.</span><span style="color:#9f7bb6">nickname</span><span style="color:#bcbec4">&quot;</span></div><div class="ln" style="top:639px;left:660.1px"><span style="color:#bcbec4">:value</span><span style="color:#a5c25c">=&quot;</span><span style="color:#bcbec4">user.</span><span style="color:#9f7bb6">id</span><span style="color:#bcbec4">&quot;</span></div><div class="ln" style="top:661px;left:644.5px"><span style="color:#e3bd6d">/&gt;</span></div><div class="ln" style="top:683px;left:628.9px"><span style="color:#e3bd6d">&lt;/</span><span style="color:#2fb6a0">el-select</span><span style="color:#e3bd6d">&gt;</span></div><div class="ln" style="top:705px;left:613.3px"><span style="color:#e3bd6d">&lt;/</span><span style="color:#2fb6a0">el-form-item</span><span style="color:#e3bd6d">&gt;</span></div><div class="ln" style="top:727px;left:597.7px"><span style="color:#e3bd6d">&lt;/</span><span style="color:#2fb6a0">el-form</span><span style="color:#e3bd6d">&gt;</span></div><div class="ln" style="top:749px;left:582.1px"><span style="color:#e3bd6d">&lt;/</span><span style="color:#2fb6a0">el-card</span><span style="color:#e3bd6d">&gt;</span></div><div class="ln" style="top:771px;left:566.5px"><span style="color:#e3bd6d">&lt;/</span><span style="color:#2fb6a0">el-col</span><span style="color:#e3bd6d">&gt;</span></div>
<div class="abs" style="left:559px;top:134px;width:469px;height:662px;border:3px solid #f23d7b"></div>
</body></html>
